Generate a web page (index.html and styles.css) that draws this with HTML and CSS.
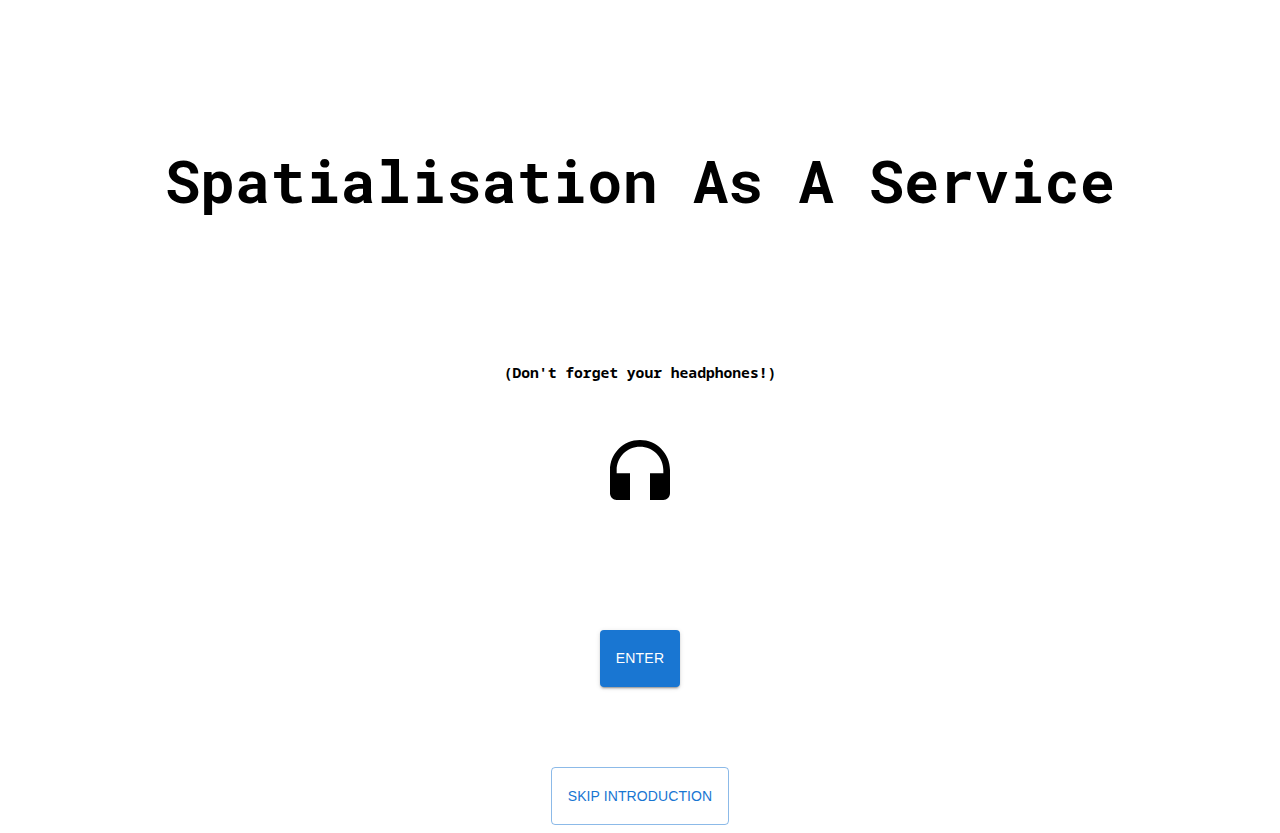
FILE: index.html
```
<!DOCTYPE html>
<html lang="en">
<head>
<meta charset="utf-8">
<title>Spatialisation As A Service</title>
<link rel="stylesheet" href="styles.css">
</head>
<body>
<main class="intro">
<h1 class="title">Spatialisation As A Service</h1>
<h4 class="hint">(Don't forget your headphones!)</h4>
<svg class="headphones" viewBox="0 0 24 24" aria-hidden="true"><path d="M12 3c-4.97 0-9 4.03-9 9v7c0 1.1.9 2 2 2h4v-8H5v-1c0-3.87 3.13-7 7-7s7 3.13 7 7v1h-4v8h4c1.1 0 2-.9 2-2v-7c0-4.97-4.03-9-9-9z"/></svg>
<button class="button button-contained">Enter</button>
<button class="button button-outlined">Skip introduction</button>
</main>
</body>
</html>
```

FILE: styles.css
```
body {
  margin: 0;
  background: #fff;
  color: #000;
}

.intro {
  display: flex;
  flex-direction: column;
  align-items: center;
  height: 833px;
  overflow: hidden;
}

.title {
  margin: 141px 0 0;
  font: bold 58.65px/80px "Roboto Mono", "Liberation Mono", monospace;
  white-space: nowrap;
}

.hint {
  margin: 141px 0 0;
  font: bold 14.66px/20px "Noto Sans Mono", "Liberation Mono", monospace;
}

.headphones {
  width: 80px;
  height: 80px;
  margin-top: 48px;
}

.button {
  box-sizing: border-box;
  flex: none;
  border: 0;
  border-radius: 4px;
  padding: 0;
  font: 400 14px/24.5px "Liberation Sans", Arial, sans-serif;
  letter-spacing: 0.1px;
  text-transform: uppercase;
}

.button-contained {
  width: 80px;
  height: 57px;
  margin-top: 120px;
  background: #1976d2;
  color: #fff;
  letter-spacing: 0.2px;
  box-shadow: 0 3px 1px -2px rgba(0, 0, 0, 0.2), 0 2px 2px 0 rgba(0, 0, 0, 0.14), 0 1px 5px 0 rgba(0, 0, 0, 0.12);
}

.button-outlined {
  width: 178px;
  height: 58px;
  margin-top: 80px;
  border: 1px solid rgba(25, 118, 210, 0.5);
  background: transparent;
  color: #1976d2;
}
```
